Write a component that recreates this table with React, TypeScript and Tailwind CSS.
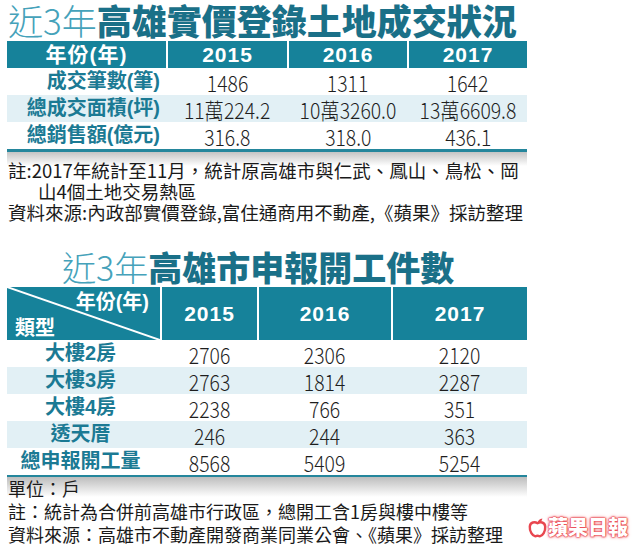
import React from "react";

const CJK = '"Noto Sans CJK TC", "Noto Sans CJK SC", sans-serif';
const LAT = '"Liberation Sans", "Noto Sans CJK TC", sans-serif';

function Title({ bold, className }: { bold: string; className?: string }) {
  return (
    <div className={"flex items-center whitespace-nowrap " + (className ?? "")} style={{ fontFamily: CJK }}>
      <span className="text-[#45a2ba] font-extralight">近3年</span>
      <span className="text-[#1a7088] font-black">{bold}</span>
    </div>
  );
}

const t1cols = "grid grid-cols-[159px_119px_118px_118px] gap-x-[2px]";
const t2cols = "grid grid-cols-[153px_95px_132px_134px] gap-x-[2px]";

function Num({ v }: { v: string }) {
  return (
    <div className="flex items-center justify-center">
      <span className="inline-block text-[22px] leading-[26px] font-light text-[#1e1e1e] scale-x-[0.88]" style={{ fontFamily: CJK }}>
        {v}
      </span>
    </div>
  );
}

function Apple() {
  return (
    <svg width="19" height="21" viewBox="0 0 19 21" className="shrink-0">
      <path
        d="M9.5 6.2 C7 4.6 2.2 4.8 1.8 9.6 C1.4 14.2 4.6 19 7.2 19.2 C8.3 19.3 8.9 18.6 9.5 18.6 C10.1 18.6 10.8 19.3 11.9 19.2 C14.6 19 17.6 14.2 17.2 9.6 C16.8 4.8 12 4.6 9.5 6.2 Z"
        fill="#fff"
        stroke="#e8464f"
        strokeWidth="2.4"
      />
      <path d="M9.6 6 C9.8 3.6 11.4 1.8 14.4 1.4 C14 3.8 12.4 5.4 9.6 6 Z" fill="#e8464f" />
    </svg>
  );
}

export default function App() {
  const t1 = [
    ["成交筆數(筆)", "1486", "1311", "1642"],
    ["總成交面積(坪)", "11萬224.2", "10萬3260.0", "13萬6609.8"],
    ["總銷售額(億元)", "316.8", "318.0", "436.1"],
  ];
  const t2 = [
    ["大樓2房", "2706", "2306", "2120"],
    ["大樓3房", "2763", "1814", "2287"],
    ["大樓4房", "2238", "766", "351"],
    ["透天厝", "246", "244", "363"],
    ["總申報開工量", "8568", "5409", "5254"],
  ];
  const headCell = "bg-[#16829a] text-white font-bold flex items-center justify-center";
  return (
    <div className="w-[640px] h-[550px] bg-white overflow-hidden">
      <div className="ml-[7px] w-[520px]">
        {/* Title 1 */}
        <Title bold="高雄實價登錄土地成交狀況" className="h-[40px] text-[35px] leading-[40px] pl-[1px]" />

        {/* Table 1 */}
        <div className={t1cols + " h-[27px] mt-[1px]"}>
          {["年份(年)", "2015", "2016", "2017"].map((h, i) => (
            <div key={i} className={headCell + " text-[21px] leading-[27px] tracking-[1px]"} style={{ fontFamily: LAT }}>
              {h}
            </div>
          ))}
        </div>
        {t1.map((r, i) => (
          <div key={i} className={t1cols + " h-[27px] " + (i % 2 === 1 ? "bg-[#e2f0f5]" : "bg-white")}>
            <div className="flex items-center justify-end pr-[6px] text-[20px] leading-[27px] font-bold text-[#1b7a94] whitespace-nowrap" style={{ fontFamily: LAT }}>
              {r[0]}
            </div>
            <Num v={r[1]} />
            <Num v={r[2]} />
            <Num v={r[3]} />
          </div>
        ))}
        <div className="h-[3px] bg-[#24869c]" />

        {/* Notes 1 */}
        <div
          className="pt-[8px] text-[18.5px] leading-[21px] text-[#1a1a1a] whitespace-nowrap bg-[linear-gradient(#c4c4c4,#ffffff_14px)]"
          style={{ fontFamily: CJK }}
        >
          <div className="pl-[1px]">註:2017年統計至11月，統計原高雄市與仁武、鳳山、鳥松、岡</div>
          <div className="pl-[31px]">山4個土地交易熱區</div>
          <div className="pl-[1px]">資料來源:內政部實價登錄,富住通商用不動產,《蘋果》採訪整理</div>
        </div>

        {/* Title 2 */}
        <Title bold="高雄市申報開工件數" className="h-[41px] mt-[23px] text-[34px] leading-[38px] pl-[55px]" />

        {/* Table 2 */}
        <div className={t2cols + " h-[53px]"}>
          <div className="relative bg-[#16829a] text-white font-bold text-[20px] flex flex-col justify-between" style={{ fontFamily: LAT }}>
            <svg className="absolute inset-0" width="153" height="53" viewBox="0 0 153 53">
              <line x1="0" y1="0" x2="153" y2="53" stroke="#ffffff" strokeWidth="2" />
            </svg>
            <div className="text-right pr-[11px] leading-[26px] pt-[2px]">年份(年)</div>
            <div className="text-left pl-[8px] leading-[24px]">類型</div>
          </div>
          {["2015", "2016", "2017"].map((h, i) => (
            <div key={i} className={headCell + " text-[21px] tracking-[1px]"} style={{ fontFamily: LAT }}>
              {h}
            </div>
          ))}
        </div>
        {t2.map((r, i) => (
          <div key={i} className={t2cols + " h-[27px] " + (i % 2 === 1 ? "bg-[#e2f0f5]" : "bg-white")}>
            <div className="flex items-center justify-center pr-[6px] text-[20px] leading-[27px] font-bold text-[#1b7a94] whitespace-nowrap" style={{ fontFamily: LAT }}>
              {r[0]}
            </div>
            <Num v={r[1]} />
            <Num v={r[2]} />
            <Num v={r[3]} />
          </div>
        ))}
        <div className="h-[2px] bg-[#24869c]" />
      </div>

      {/* Bottom notes + logo */}
      <div className="flex">
        <div
          className="ml-[7px] w-[520px] text-[18px] leading-[23px] text-[#1a1a1a] whitespace-nowrap bg-[linear-gradient(#bdbdbd,#ffffff_20px)]"
          style={{ fontFamily: CJK }}
        >
          <div className="pl-[1px]">單位：戶</div>
          <div className="pl-[1px]">註：統計為合併前高雄市行政區，總開工含1房與樓中樓等</div>
          <div className="pl-[1px]">資料來源：高雄市不動產開發商業同業公會、《蘋果》採訪整理</div>
        </div>
        <div className="mt-[31px] ml-[1px] flex items-center gap-[1px]">
          <Apple />
          <span
            className="text-[20px] font-black text-white leading-none [text-shadow:0_0_1px_#e8464f,0_0_1px_#e8464f,0_0_2px_#e8464f,0_0_2px_#e8464f,0_0_3px_#f7a3a8,0_0_4px_#f7a3a8]"
            style={{ fontFamily: CJK }}
          >
            蘋果日報
          </span>
        </div>
      </div>
    </div>
  );
}
